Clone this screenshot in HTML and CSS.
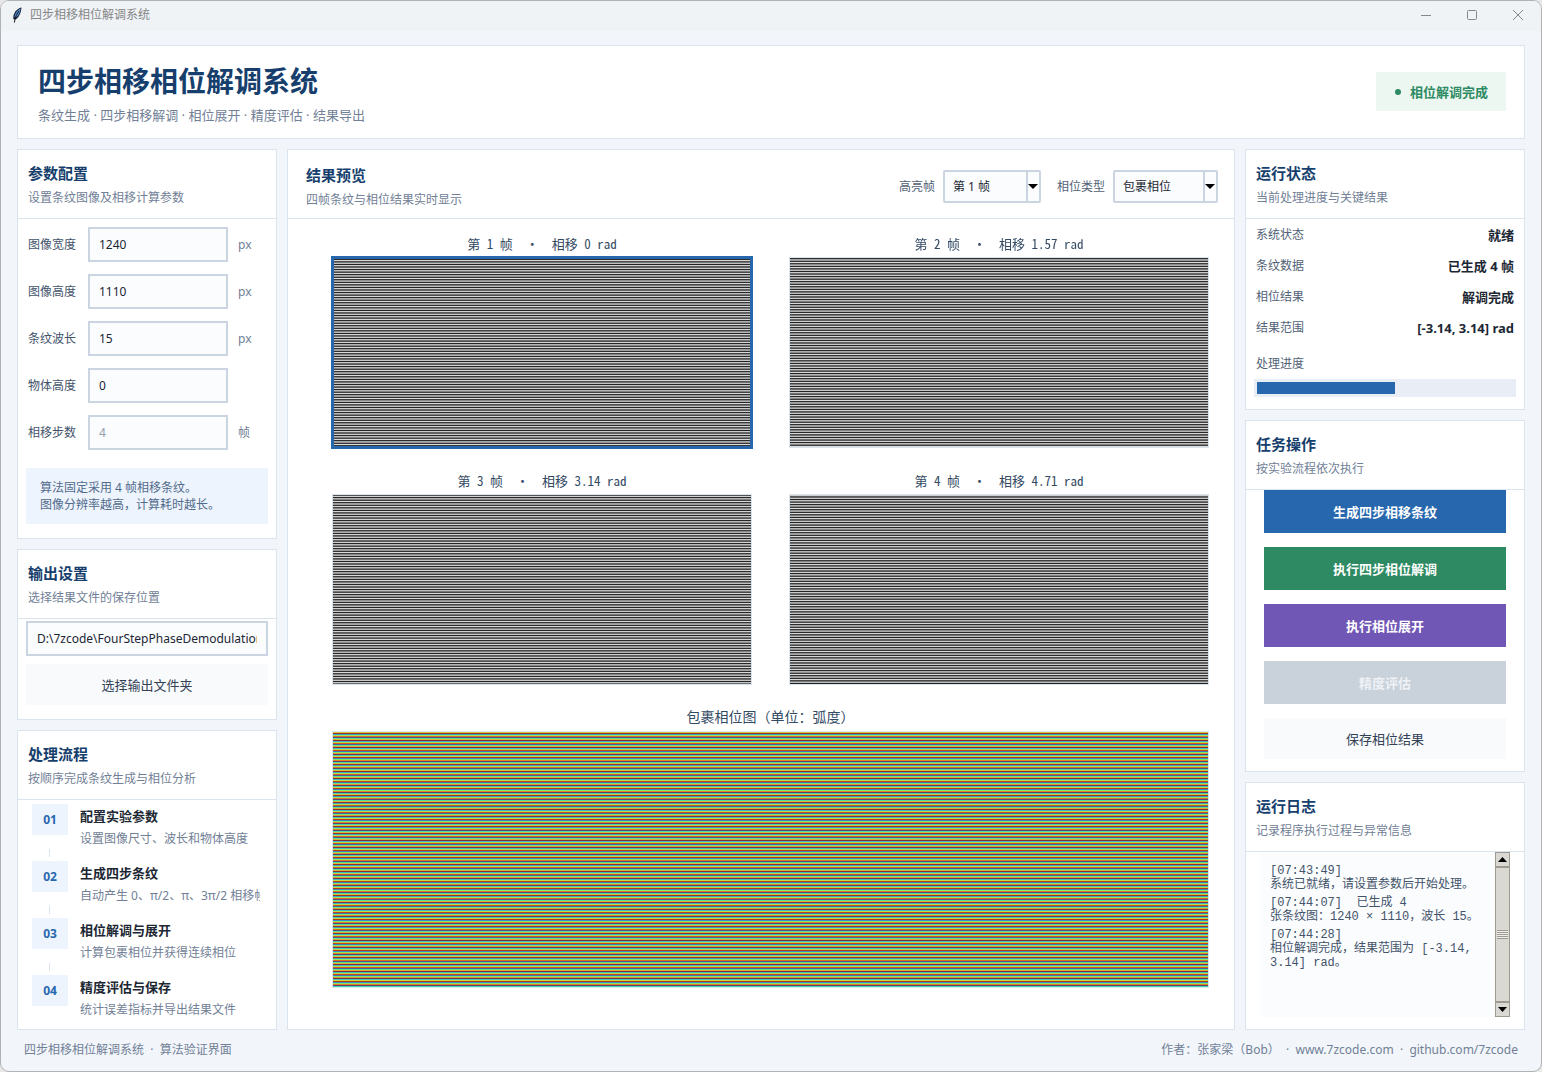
FILE: index.html
```html
<!DOCTYPE html>
<html lang="zh-CN">

<head>
      <meta charset="UTF-8">
      <meta name="viewport" content="width=device-width, initial-scale=1.0">
      <title>四步相移相位解调系统</title>
      <link rel="stylesheet" href="styles.css">
</head>

<body>
      <div class="window">
            <div class="titlebar">
                  <svg class="feather" viewBox="0 0 12 16" width="12" height="16">
                        <path d="M10.5 0.5C7 1 3.500 4.500 2.500 8.500L2.200 12L4.500 12.500C8 10.500 10 6 10.500 0.500Z" fill="#17233a" />
                        <path d="M9.500 1.500C6.200 3.200 4.300 6 3.600 9.500L4 11L5.500 10C8 7.800 9.200 5 9.500 1.500Z" fill="#5a96d8" />
                        <path d="M8 4C6.200 6.500 4.200 9.500 3.400 15.500" fill="none" stroke="#0b0f18" />
                  </svg>
                  <span class="window-title">四步相移相位解调系统</span>
                  <div class="window-buttons">
                        <button aria-label="最小化"><svg viewBox="0 0 12 12" width="12" height="12"><path d="M1 6.500H11" /></svg></button>
                        <button aria-label="最大化"><svg viewBox="0 0 12 12" width="12" height="12"><rect x="1.500" y="1.500" width="9" height="9" rx="1" /></svg></button>
                        <button aria-label="关闭"><svg viewBox="0 0 12 12" width="12" height="12"><path d="M1 1L11 11M11 1L1 11" /></svg></button>
                  </div>
            </div>

            <header class="banner">
                  <div class="banner-text">
                        <h1>四步相移相位解调系统</h1>
                        <p>条纹生成 · 四步相移解调 · 相位展开 · 精度评估 · 结果导出</p>
                  </div>
                  <div class="badge"><span class="dot"></span>相位解调完成</div>
            </header>

            <main class="columns">
                  <div class="column">
                        <section class="card">
                              <div class="card-head">
                                    <h2>参数配置</h2>
                                    <p>设置条纹图像及相移计算参数</p>
                              </div>
                              <div class="params">
                                    <div class="param">
                                          <label for="img-width">图像宽度</label>
                                          <input id="img-width" type="text" value="1240">
                                          <span>px</span>
                                    </div>
                                    <div class="param">
                                          <label for="img-height">图像高度</label>
                                          <input id="img-height" type="text" value="1110">
                                          <span>px</span>
                                    </div>
                                    <div class="param">
                                          <label for="wavelength">条纹波长</label>
                                          <input id="wavelength" type="text" value="15">
                                          <span>px</span>
                                    </div>
                                    <div class="param">
                                          <label for="obj-height">物体高度</label>
                                          <input id="obj-height" type="text" value="0">
                                    </div>
                                    <div class="param">
                                          <label for="steps">相移步数</label>
                                          <input id="steps" type="text" value="4" disabled>
                                          <span>帧</span>
                                    </div>
                              </div>
                              <p class="note">算法固定采用 4 帧相移条纹。<br>图像分辨率越高，计算耗时越长。</p>
                        </section>

                        <section class="card">
                              <div class="card-head">
                                    <h2>输出设置</h2>
                                    <p>选择结果文件的保存位置</p>
                              </div>
                              <div class="output">
                                    <input type="text" aria-label="输出路径" value="D:\7zcode\FourStepPhaseDemodulation">
                                    <button class="btn plain">选择输出文件夹</button>
                              </div>
                        </section>

                        <section class="card grow">
                              <div class="card-head">
                                    <h2>处理流程</h2>
                                    <p>按顺序完成条纹生成与相位分析</p>
                              </div>
                              <ol class="flow">
                                    <li>
                                          <span class="num">01</span>
                                          <div>
                                                <h3>配置实验参数</h3>
                                                <p>设置图像尺寸、波长和物体高度</p>
                                          </div>
                                    </li>
                                    <li>
                                          <span class="num">02</span>
                                          <div>
                                                <h3>生成四步条纹</h3>
                                                <p>自动产生 0、π/2、π、3π/2 相移帧</p>
                                          </div>
                                    </li>
                                    <li>
                                          <span class="num">03</span>
                                          <div>
                                                <h3>相位解调与展开</h3>
                                                <p>计算包裹相位并获得连续相位</p>
                                          </div>
                                    </li>
                                    <li>
                                          <span class="num">04</span>
                                          <div>
                                                <h3>精度评估与保存</h3>
                                                <p>统计误差指标并导出结果文件</p>
                                          </div>
                                    </li>
                              </ol>
                        </section>
                  </div>

                  <section class="card preview">
                        <div class="card-head">
                              <div>
                                    <h2>结果预览</h2>
                                    <p>四帧条纹与相位结果实时显示</p>
                              </div>
                              <div class="pickers">
                                    <label for="frame">高亮帧</label>
                                    <div class="picker short">
                                          <select id="frame">
                                                <option>第 1 帧</option>
                                                <option>第 2 帧</option>
                                                <option>第 3 帧</option>
                                                <option>第 4 帧</option>
                                          </select>
                                    </div>
                                    <label for="phase">相位类型</label>
                                    <div class="picker">
                                          <select id="phase">
                                                <option>包裹相位</option>
                                                <option>展开相位</option>
                                          </select>
                                    </div>
                              </div>
                        </div>
                        <div class="plots">
                              <figure class="active">
                                    <figcaption>第 1 帧&nbsp; ·&nbsp; 相移 0 rad</figcaption>
                                    <canvas data-shift="0"></canvas>
                              </figure>
                              <figure>
                                    <figcaption>第 2 帧&nbsp; ·&nbsp; 相移 1.57 rad</figcaption>
                                    <canvas data-shift="1"></canvas>
                              </figure>
                              <figure>
                                    <figcaption>第 3 帧&nbsp; ·&nbsp; 相移 3.14 rad</figcaption>
                                    <canvas data-shift="2"></canvas>
                              </figure>
                              <figure>
                                    <figcaption>第 4 帧&nbsp; ·&nbsp; 相移 4.71 rad</figcaption>
                                    <canvas data-shift="3"></canvas>
                              </figure>
                              <figure class="wide">
                                    <figcaption>包裹相位图（单位：弧度）</figcaption>
                                    <canvas id="wrapped"></canvas>
                              </figure>
                        </div>
                  </section>

                  <div class="column">
                        <section class="card">
                              <div class="card-head">
                                    <h2>运行状态</h2>
                                    <p>当前处理进度与关键结果</p>
                              </div>
                              <dl class="status">
                                    <div><dt>系统状态</dt><dd>就绪</dd></div>
                                    <div><dt>条纹数据</dt><dd>已生成 4 帧</dd></div>
                                    <div><dt>相位结果</dt><dd>解调完成</dd></div>
                                    <div><dt>结果范围</dt><dd>[-3.14, 3.14] rad</dd></div>
                              </dl>
                              <div class="progress">
                                    <label for="progress">处理进度</label>
                                    <progress id="progress" value="54" max="100"></progress>
                              </div>
                        </section>

                        <section class="card">
                              <div class="card-head">
                                    <h2>任务操作</h2>
                                    <p>按实验流程依次执行</p>
                              </div>
                              <div class="tasks">
                                    <button class="btn blue">生成四步相移条纹</button>
                                    <button class="btn green">执行四步相位解调</button>
                                    <button class="btn purple">执行相位展开</button>
                                    <button class="btn" disabled>精度评估</button>
                                    <button class="btn plain">保存相位结果</button>
                              </div>
                        </section>

                        <section class="card grow">
                              <div class="card-head">
                                    <h2>运行日志</h2>
                                    <p>记录程序执行过程与异常信息</p>
                              </div>
                              <div class="log">
                                    <div class="log-text">
                                          <p>[07:43:49]<br>系统已就绪，请设置参数后开始处理。</p>
                                          <p>[07:44:07]&nbsp; 已生成 4<br>张条纹图：1240 × 1110，波长 15。</p>
                                          <p>[07:44:28]<br>相位解调完成，结果范围为 [-3.14,<br>3.14] rad。</p>
                                    </div>
                                    <div class="scrollbar">
                                          <button aria-label="向上滚动"><svg viewBox="0 0 9 5" width="9" height="5"><path d="M0 5L4.500 0L9 5Z" /></svg></button>
                                          <div class="thumb"><span></span></div>
                                          <button aria-label="向下滚动"><svg viewBox="0 0 9 5" width="9" height="5"><path d="M0 0L4.500 5L9 0Z" /></svg></button>
                                    </div>
                              </div>
                        </section>
                  </div>
            </main>

            <footer>
                  <span>四步相移相位解调系统&nbsp; ·&nbsp; 算法验证界面</span>
                  <span>作者：张家梁（Bob）&nbsp; ·&nbsp; <a href="#">www.7zcode.com</a>&nbsp; ·&nbsp; <a href="#">github.com/7zcode</a></span>
            </footer>
      </div>
      <script src="script.js"></script>
</body>

</html>
```
FILE: styles.css
```css
* {
      box-sizing: border-box;
      margin: 0;
      padding: 0;
}
body {
      background-color: #e8e8e8;
      color: #1c2733;
      font-family: "Noto Sans", "Noto Sans CJK SC", sans-serif;
      font-size: 12px;
      line-height: 18px;
}
button,
input,
select {
      font: inherit;
      color: inherit;
}
h1,
h2 {
      color: #173f6d;
}

.window {
      display: flex;
      flex-direction: column;
      min-height: 100vh;
      border: 1px solid #b2b2b2;
      border-radius: 9px;
      background-color: #f2f6fb;
      overflow: hidden;
}

.titlebar {
      display: flex;
      flex-shrink: 0;
      align-items: center;
      height: 30px;
      padding: 0 0 2px 10px;
      background-color: #f0f3f6;
      color: #858788;
}
.window-title {
      flex: 1;
      margin-left: 7px;
}
.window-buttons {
      display: flex;
}
.window-buttons button {
      display: flex;
      align-items: center;
      justify-content: center;
      width: 46px;
      height: 28px;
      border: none;
      background: none;
}
.window-buttons svg {
      fill: none;
      stroke: #858788;
}

.banner {
      display: flex;
      align-items: center;
      justify-content: space-between;
      margin: 14px 16px 10px;
      padding: 12px 18px 13px 20px;
      border: 1px solid #dae4ee;
      background-color: white;
}
.banner-text {
      padding-top: 3px;
}
.banner h1 {
      font-size: 28px;
      line-height: 40px;
}
.banner p {
      margin-top: 4px;
      color: #718096;
      font-size: 13px;
      line-height: 20px;
}
.badge {
      display: flex;
      align-items: center;
      gap: 9px;
      height: 39px;
      padding: 0 18px 0 19px;
      background-color: #edf7f2;
      color: #2d8a62;
      font-size: 13px;
      font-weight: bold;
}
.dot {
      width: 6px;
      height: 6px;
      border-radius: 50%;
      background-color: #2d8a62;
}

.columns {
      flex: 1;
      display: grid;
      grid-template-columns: 260px minmax(0, 1fr) 280px;
      gap: 10px;
      padding: 0 16px;
}
.column {
      display: flex;
      flex-direction: column;
      gap: 10px;
      min-width: 0;
}
.card {
      display: flex;
      flex-direction: column;
      border: 1px solid #dae4ee;
      background-color: white;
}
.grow {
      flex: 1;
}
.card-head {
      flex-shrink: 0;
      height: 69px;
      padding: 13px 10px 0;
      border-bottom: 1px solid #dae4ee;
}
.card-head h2 {
      font-size: 15px;
      line-height: 20px;
}
.card-head p {
      margin-top: 6px;
      color: #718096;
}

/* left column */
.params {
      display: flex;
      flex-direction: column;
      gap: 12px;
      padding: 8px 10px 18px;
}
.param {
      display: flex;
      align-items: center;
      color: #718096;
}
.param label {
      width: 60px;
      color: #43536a;
}
.param span {
      margin-left: 10px;
}
input {
      width: 140px;
      height: 35px;
      padding: 0 9px;
      border: 2px solid #cbd5e1;
      background-color: #fafcfe;
      color: #1c2733;
}
input:disabled {
      color: #94a0ae;
}
.note {
      margin: 0 8px 14px;
      padding: 11px 14px;
      background-color: #edf4fd;
      color: #526b8c;
      line-height: 17px;
}
.output {
      display: flex;
      flex-direction: column;
      gap: 8px;
      padding: 2px 8px 14px;
}
.output input {
      width: 100%;
}
.btn {
      height: 43px;
      border: none;
      background-color: #c9d1da;
      color: white;
      font-size: 13px;
      font-weight: bold;
}
.btn:disabled {
      color: #eef2f6;
}
.btn.blue {
      background-color: #2767ae;
}
.btn.green {
      background-color: #2d8a62;
}
.btn.purple {
      background-color: #7056b5;
}
.btn.plain {
      height: 41px;
      background-color: #f8fafc;
      color: #334155;
      font-weight: normal;
}
.flow {
      padding: 4px 16px 0 14px;
      list-style: none;
}
.flow li {
      position: relative;
      display: flex;
      gap: 12px;
      height: 57px;
}
.flow li:last-child {
      height: 53px;
}
.flow li:not(:last-child)::before {
      content: "";
      position: absolute;
      left: 17px;
      top: 45px;
      width: 1px;
      height: 8px;
      background-color: #dae4ee;
}
.flow div {
      flex: 1;
      min-width: 0;
      overflow: hidden;
      white-space: nowrap;
}
.num {
      width: 36px;
      height: 31px;
      background-color: #edf4fd;
      color: #2767ae;
      font-weight: bold;
      line-height: 31px;
      text-align: center;
}
.flow h3 {
      font-size: 13px;
      line-height: 24px;
}
.flow p {
      margin-top: 2px;
      color: #718096;
}

/* preview */
.preview .card-head {
      display: flex;
      justify-content: space-between;
      padding: 15px 16px 0 18px;
}
.pickers {
      display: flex;
      align-items: center;
      gap: 8px;
      height: 43px;
      color: #526277;
}
.picker {
      position: relative;
      width: 105px;
      height: 33px;
}
.picker.short {
      width: 98px;
      margin-right: 8px;
}
.picker select {
      appearance: none;
      width: 100%;
      height: 100%;
      padding: 0 18px 0 8px;
      border: 2px solid #cbd5e1;
      border-radius: 2px;
      background-color: #fafcfe;
      color: #1c2733;
}
.picker::before {
      content: "";
      position: absolute;
      top: 0;
      bottom: 0;
      right: 13px;
      width: 2px;
      background-color: #cbd5e1;
      pointer-events: none;
}
.picker::after {
      content: "";
      position: absolute;
      top: 14px;
      right: 3px;
      border: 5px solid transparent;
      border-top-color: black;
      border-bottom: none;
      pointer-events: none;
}
.plots {
      display: grid;
      grid-template-columns: 1fr 1fr;
      gap: 24px 37px;
      padding: 16px 25px 40px 44px;
}
figure {
      min-width: 0;
}
figure.wide {
      grid-column: span 2;
}
figcaption {
      margin-bottom: 4px;
      color: #334a63;
      font-family: "Noto Sans CJK SC", sans-serif;
      font-feature-settings: "hwid";
      font-size: 13px;
      text-align: center;
}
.wide figcaption {
      margin-bottom: 8px;
      font-feature-settings: normal;
      font-size: 14px;
      line-height: 14px;
}
canvas {
      display: block;
      width: 100%;
      aspect-ratio: 420 / 191;
      border: 1px solid #dae4ee;
      image-rendering: pixelated;
}
.wide canvas {
      aspect-ratio: 877 / 257;
}
.active canvas {
      outline: 3px solid #2767ae;
      outline-offset: -2px;
}

/* right column */
.status div {
      display: flex;
      align-items: center;
      justify-content: space-between;
      height: 31px;
      padding: 0 10px;
}
.status dt,
.progress label {
      color: #526277;
}
.status dd {
      font-size: 13px;
      font-weight: bold;
}
.progress {
      display: flex;
      flex-direction: column;
      gap: 6px;
      padding: 12px 8px;
}
.progress label {
      padding-left: 2px;
}
progress {
      appearance: none;
      width: 100%;
      height: 18px;
      border: 3px solid #e9eef6;
      background-color: #e9eef6;
}
progress::-webkit-progress-bar {
      background-color: #e9eef6;
}
progress::-webkit-progress-value {
      background-color: #2767ae;
}
.tasks {
      display: flex;
      flex-direction: column;
      gap: 14px;
      padding: 0 18px 12px;
}
.log {
      flex: 1;
      display: flex;
      margin: 0 14px 12px;
      background-color: #fafcfe;
}
.log-text {
      flex: 1;
      padding: 12px 0 0 10px;
      color: #43536a;
      font-family: "Liberation Mono", "Noto Sans CJK SC", monospace;
      line-height: 14px;
      white-space: nowrap;
}
.log-text p {
      margin-bottom: 4px;
}
.scrollbar {
      display: flex;
      flex-direction: column;
      width: 15px;
      border: 1px solid #9e9a91;
      background-color: #d9d8d3;
}
.scrollbar button {
      display: flex;
      align-items: center;
      justify-content: center;
      height: 13px;
      border: none;
      background: none;
}
.thumb {
      flex: 1;
      display: flex;
      align-items: center;
      justify-content: center;
      border: 1px solid #9e9a91;
      border-width: 2px 0;
}
.thumb span {
      width: 11px;
      height: 9px;
      background-image: repeating-linear-gradient(#9e9a91 0 1px, #efeeea 1px 2px);
}

footer {
      display: flex;
      justify-content: space-between;
      padding: 11px 23px 12px;
      color: #718096;
}
footer a {
      color: inherit;
      text-decoration: none;
}
```
FILE: script.js
```js
var imageHeight = 1110;
var wavelength = 15;
var stops = [
      [48, 18, 59], [70, 107, 227], [40, 187, 236], [49, 242, 153],
      [162, 252, 60], [237, 208, 58], [251, 128, 34], [210, 49, 5], [122, 4, 3]
];

function grayColor(phase) {
      var v = 127 + 120 * Math.cos(phase);
      return [v, v, v];
}

function phaseColor(phase) {
      // zero phase sits in the middle of the colour map
      var t = (phase / (2 * Math.PI) + 0.5) % 1 * (stops.length - 1);
      var i = Math.floor(t);
      return stops[i].map(function (c, n) {
            return c + (stops[i + 1][n] - c) * (t - i);
      });
}

// one canvas row per screen row, stretched sideways by the stylesheet
function drawRows(canvas, colorAt) {
      var rows = canvas.clientHeight;
      var samples = 8;
      canvas.width = 1;
      canvas.height = rows;
      var ctx = canvas.getContext("2d");
      for (var y = 0; y < rows; y++) {
            // average the image rows that fall on this screen row
            var sum = [0, 0, 0];
            for (var s = 0; s < samples; s++) {
                  var source = (y + s / samples) * imageHeight / rows;
                  colorAt(2 * Math.PI * source / wavelength).forEach(function (c, n) {
                        sum[n] += c / samples;
                  });
            }
            ctx.fillStyle = "rgb(" + sum.map(Math.round).join(",") + ")";
            ctx.fillRect(0, y, 1, 1);
      }
}

function drawAll() {
      document.querySelectorAll("canvas[data-shift]").forEach(function (canvas) {
            var shift = canvas.dataset.shift * Math.PI / 2;
            drawRows(canvas, function (phase) {
                  return grayColor(phase + shift);
            });
      });
      drawRows(document.querySelector("#wrapped"), phaseColor);
}

document.querySelector("#frame").addEventListener("change", function (event) {
      document.querySelectorAll("figure").forEach(function (figure, i) {
            figure.classList.toggle("active", i === event.target.selectedIndex);
      });
});
window.addEventListener("resize", drawAll);
drawAll();
```
